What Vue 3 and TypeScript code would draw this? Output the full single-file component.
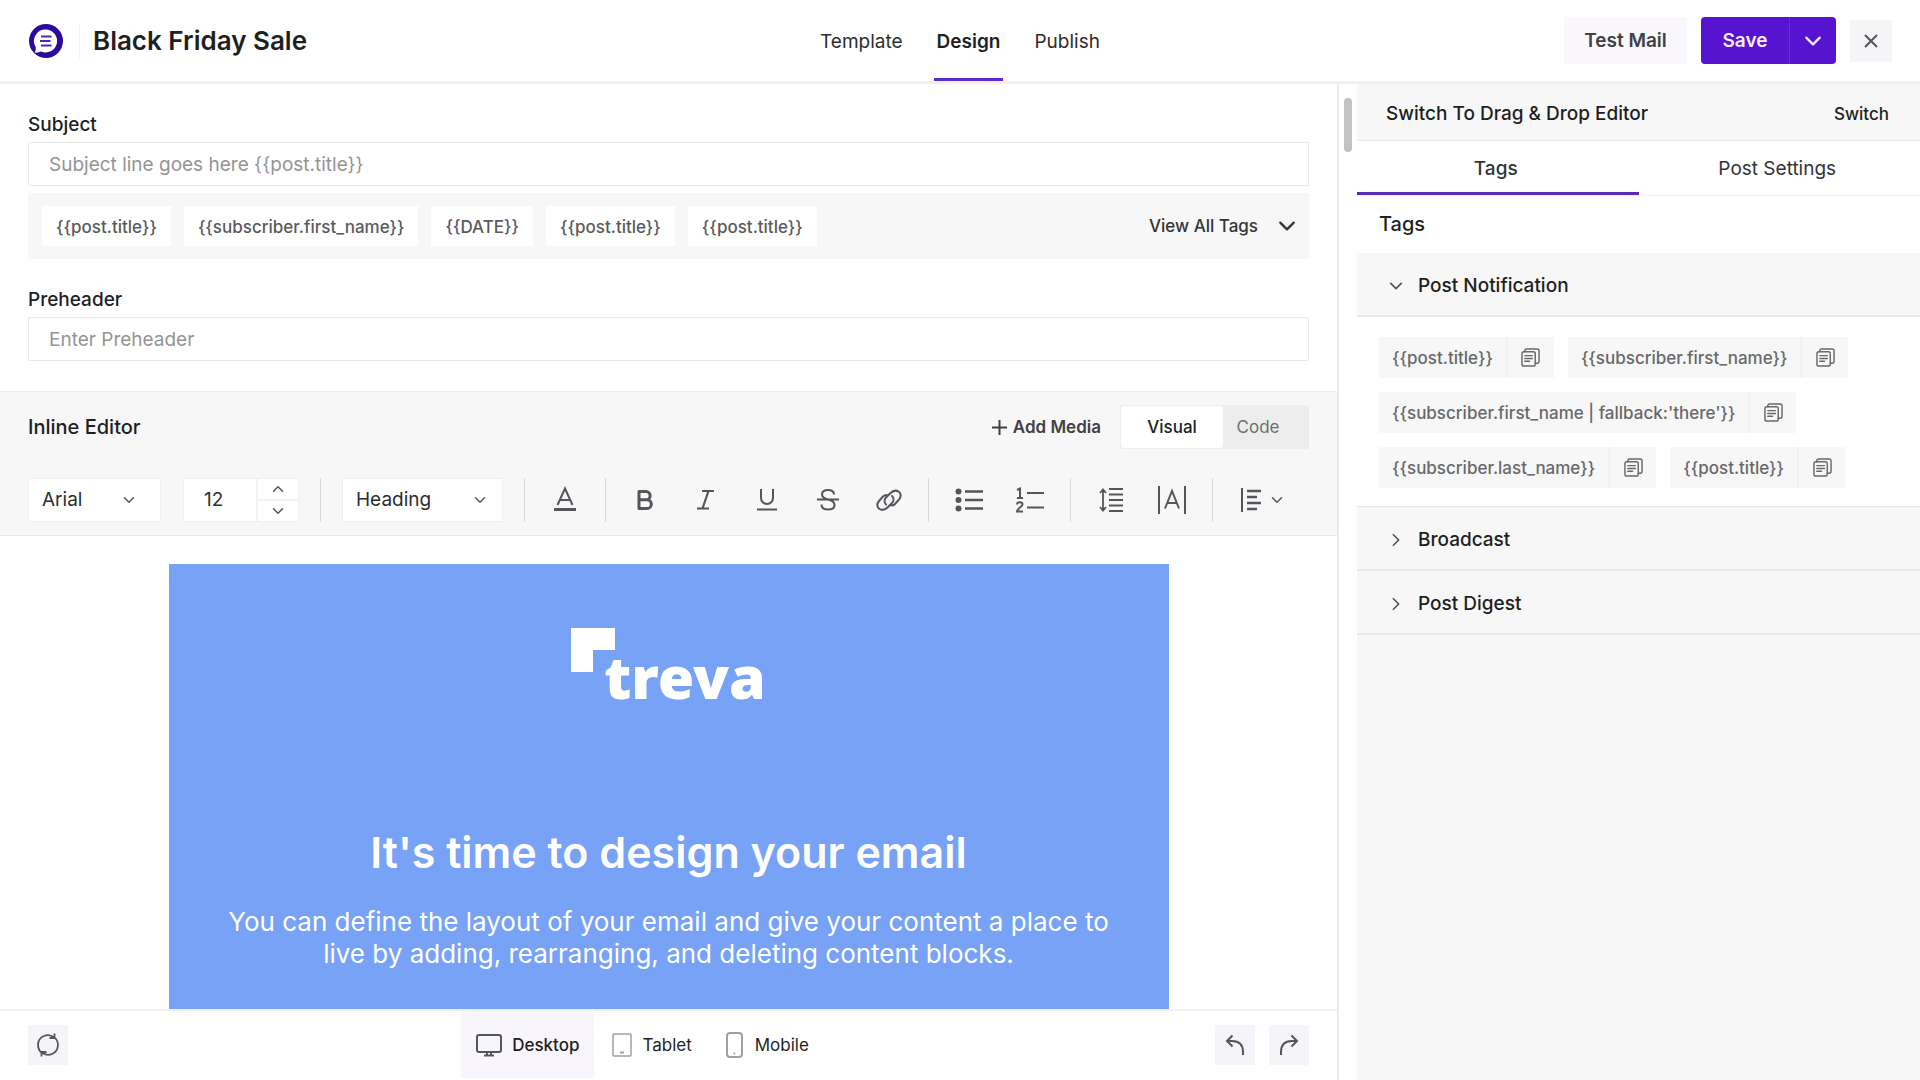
<script setup lang="ts">
import { ref } from 'vue'

const steps = ['Template', 'Design', 'Publish']
const activeStep = ref('Design')

const subject = ref('')
const preheader = ref('')
const subjectTags = [
  '{{post.title}}',
  '{{subscriber.first_name}}',
  '{{DATE}}',
  '{{post.title}}',
  '{{post.title}}',
]

const mode = ref<'Visual' | 'Code'>('Visual')
const fontFamily = ref('Arial')
const fontSize = ref('12')
const blockStyle = ref('Heading')

const device = ref('Desktop')

const panelTabs = ['Tags', 'Post Settings']
const activePanelTab = ref('Tags')

interface TagGroup {
  title: string
  open: boolean
  tags: string[]
}

const groups = ref<TagGroup[]>([
  {
    title: 'Post Notification',
    open: true,
    tags: [
      '{{post.title}}',
      '{{subscriber.first_name}}',
      "{{subscriber.first_name | fallback:'there'}}",
      '{{subscriber.last_name}}',
      '{{post.title}}',
    ],
  },
  { title: 'Broadcast', open: false, tags: [] },
  { title: 'Post Digest', open: false, tags: [] },
])

function stepSize(delta: number) {
  fontSize.value = String(Math.max(1, Number(fontSize.value) + delta))
}
</script>

<template>
  <div class="app">
    <svg class="defs" aria-hidden="true">
      <symbol id="chevron" viewBox="0 0 16 16">
        <path d="M2 5l6 6 6-6" fill="none" stroke="currentColor" stroke-width="2" stroke-linecap="round" stroke-linejoin="round" />
      </symbol>
      <symbol id="copy" viewBox="0 0 20 20">
        <g fill="none" stroke="currentColor" stroke-width="1.5" stroke-linecap="round" stroke-linejoin="round">
          <rect x="1" y="4" width="14" height="15" rx="2" />
          <path d="M4 4V3a2 2 0 0 1 2-2h11a2 2 0 0 1 2 2v11a2 2 0 0 1-2 2h-2M4 8h8M4 11h8M4 14h5" />
        </g>
      </symbol>
    </svg>

    <header class="topbar">
      <div class="brand">
        <svg class="logo" viewBox="0 0 34 34" aria-hidden="true">
          <circle cx="17" cy="17" r="17" fill="#2c0a9c" />
          <path d="M17.500 5.500a11.500 11.500 0 1 1-5.500 22c-2 .5-4 1.500-6.500 1 1-1 1.500-3 1.200-5.500A11.500 11.500 0 0 1 17.500 5.500z" fill="#fff" />
          <path d="M12 12.500h10.500M11 17h10.500M12 21.500h10.500" stroke="#4a2bb0" stroke-width="2" />
        </svg>
        <h1 class="title">Black Friday Sale</h1>
      </div>

      <nav class="steps">
        <a
          v-for="step in steps"
          :key="step"
          href="#"
          class="step"
          :class="{ active: step === activeStep }"
          @click.prevent="activeStep = step"
        >{{ step }}</a>
      </nav>

      <div class="actions">
        <button type="button" class="test-mail">Test Mail</button>
        <div class="save-group">
          <button type="button" class="save">Save</button>
          <button type="button" class="save-more" aria-label="More save options">
            <svg width="18" height="18"><use href="#chevron" /></svg>
          </button>
        </div>
        <button type="button" class="close" aria-label="Close">
          <svg width="14" height="14" viewBox="0 0 14 14"><path d="M1 1l12 12M13 1L1 13" stroke="currentColor" stroke-width="2" /></svg>
        </button>
      </div>
    </header>

    <div class="body">
      <main class="editor">
        <section class="fields">
          <label class="field-label" for="subject">Subject</label>
          <input id="subject" v-model="subject" class="field" type="text" placeholder="Subject line goes here {{post.title}}" />
          <div class="tag-strip">
            <div class="chips">
              <button v-for="(tag, i) in subjectTags" :key="i" type="button" class="chip">{{ tag }}</button>
            </div>
            <button type="button" class="view-all">
              View All Tags
              <svg width="18" height="18"><use href="#chevron" /></svg>
            </button>
          </div>
          <label class="field-label" for="preheader">Preheader</label>
          <input id="preheader" v-model="preheader" class="field" type="text" placeholder="Enter Preheader" />
        </section>

        <section class="inline-editor">
          <div class="inline-head">
            <h2 class="inline-title">Inline Editor</h2>
            <button type="button" class="add-media">
              <svg width="15" height="15" viewBox="0 0 15 15"><path d="M7.500 0v15M0 7.500h15" stroke="currentColor" stroke-width="2" /></svg>
              Add Media
            </button>
            <div class="modes">
              <button type="button" class="mode" :class="{ active: mode === 'Visual' }" @click="mode = 'Visual'">Visual</button>
              <button type="button" class="mode" :class="{ active: mode === 'Code' }" @click="mode = 'Code'">Code</button>
            </div>
          </div>

          <div class="toolbar">
            <div class="select family">
              <select v-model="fontFamily" aria-label="Font family">
                <option>Arial</option>
                <option>Georgia</option>
              </select>
              <svg width="12" height="12"><use href="#chevron" /></svg>
            </div>
            <div class="stepper">
              <input v-model="fontSize" type="text" aria-label="Font size" />
              <div class="stepper-buttons">
                <button type="button" aria-label="Increase size" @click="stepSize(1)">
                  <svg class="flip" width="12" height="12"><use href="#chevron" /></svg>
                </button>
                <button type="button" aria-label="Decrease size" @click="stepSize(-1)">
                  <svg width="12" height="12"><use href="#chevron" /></svg>
                </button>
              </div>
            </div>
            <span class="rule"></span>
            <div class="select block">
              <select v-model="blockStyle" aria-label="Block style">
                <option>Heading</option>
                <option>Paragraph</option>
              </select>
              <svg width="12" height="12"><use href="#chevron" /></svg>
            </div>
            <span class="rule"></span>
            <button type="button" class="tool solo" aria-label="Text colour">
              <svg viewBox="0 0 28 28"><path d="M6.500 19L14 2.500 21.500 19M9 14h10" fill="none" stroke="currentColor" stroke-width="2" /><path d="M3 23.500h22" stroke="currentColor" stroke-width="3" /></svg>
            </button>
            <span class="rule"></span>
            <div class="tools text-tools">
              <button type="button" class="tool" aria-label="Bold">
                <svg viewBox="0 0 28 28"><path d="M8 5.500h7a4 4 0 0 1 0 8.300H8zM8 13.800h8a4.300 4.300 0 0 1 0 8.700H8z" fill="none" stroke="currentColor" stroke-width="3" stroke-linejoin="round" /></svg>
              </button>
              <button type="button" class="tool" aria-label="Italic">
                <svg viewBox="0 0 28 28"><path d="M10 5h12M5 22.500h12M16.500 5l-6 17.500" fill="none" stroke="currentColor" stroke-width="2.200" /></svg>
              </button>
              <button type="button" class="tool" aria-label="Underline">
                <svg viewBox="0 0 28 28"><path d="M8 3v9a6 6 0 0 0 12 0V3M4 23.500h20" fill="none" stroke="currentColor" stroke-width="2" /></svg>
              </button>
              <button type="button" class="tool" aria-label="Strikethrough">
                <svg viewBox="0 0 28 28"><path d="M20 8.500C20 5.500 17.500 4 14 4c-3.500 0-6 1.700-6 4.500 0 3 2.500 4 6 5 4 1 6.500 2.200 6.500 5.500 0 3-2.500 4.500-6.500 4.500S7.500 22 7.500 18.500M3 13.500h22" fill="none" stroke="currentColor" stroke-width="2" /></svg>
              </button>
              <button type="button" class="tool" aria-label="Link">
                <svg viewBox="0 0 28 28"><path d="M11 18.500c-2-2-2-5 0-7l4-4c3-3 6-3.500 8.500-2s3 5 .5 8l-4 4.500c-1 1-2 1.600-3.500 1.600M17 10c2 2 2 5 0 7l-4 4c-3 3-6 3.500-8.500 2s-3-5-.5-8l4-4.500c1-1 2-1.600 3.500-1.600" fill="none" stroke="currentColor" stroke-width="2" stroke-linecap="round" /></svg>
              </button>
            </div>
            <span class="rule"></span>
            <div class="tools list-tools">
              <button type="button" class="tool" aria-label="Bulleted list">
                <svg viewBox="0 0 28 28"><g fill="currentColor"><circle cx="3.500" cy="5.500" r="3" /><circle cx="3.500" cy="14" r="3" /><circle cx="3.500" cy="22.500" r="3" /></g><path d="M10 5.500h18M10 14h18M10 22.500h18" stroke="currentColor" stroke-width="2.500" /></svg>
              </button>
              <button type="button" class="tool" aria-label="Numbered list">
                <svg viewBox="0 0 28 28"><path d="M1 4l3-1.500V12M1 12h6M1 18.500c0-3 5.500-3 5.500 0 0 2-5.500 4.500-5.500 7h6" fill="none" stroke="currentColor" stroke-width="2" /><path d="M11 7h17M11 21.500h17" stroke="currentColor" stroke-width="2" /></svg>
              </button>
            </div>
            <span class="rule"></span>
            <div class="tools list-tools">
              <button type="button" class="tool" aria-label="Line height">
                <svg viewBox="0 0 28 28"><path d="M6 3.500v21M3 7l3-3.500L9 7M3 21l3 3.500L9 21" fill="none" stroke="currentColor" stroke-width="1.800" /><path d="M12 3h14M12 8.500h14M12 14h14M12 19.500h14M12 25h14" stroke="currentColor" stroke-width="2" /></svg>
              </button>
              <button type="button" class="tool" aria-label="Letter spacing">
                <svg viewBox="0 0 28 28"><path d="M1 0v28M27 0v28M7 22.500L14 5l7 17.500M9.500 17h9" fill="none" stroke="currentColor" stroke-width="2" /></svg>
              </button>
            </div>
            <span class="rule"></span>
            <button type="button" class="tool align" aria-label="Alignment">
              <svg viewBox="0 0 28 28"><path d="M4 2v24" stroke="currentColor" stroke-width="2" /><path d="M9 5h14M9 11h10M9 17h14M9 23h10" stroke="currentColor" stroke-width="2.400" /></svg>
              <svg class="caret"><use href="#chevron" /></svg>
            </button>
          </div>
        </section>

        <section class="canvas">
          <article class="mail">
            <div class="treva">
              <svg width="44" height="44" viewBox="0 0 44 44" aria-hidden="true"><path d="M0 0h44v22H22v22H0z" fill="#fff" /></svg>
              <span class="treva-name">treva</span>
            </div>
            <h2 class="mail-title">It's time to design your email</h2>
            <p class="mail-text">You can define the layout of your email and give your content a place to live by adding, rearranging, and deleting content blocks.</p>
          </article>
        </section>

        <footer class="bottombar">
          <button type="button" class="square" aria-label="Refresh">
            <svg width="24" height="24" viewBox="0 0 24 24"><path d="M7.500 20.800A9.800 9.800 0 0 1 8 3a9.800 9.800 0 0 1 9 .8M16.500 3.200A9.800 9.800 0 0 1 16 21a9.800 9.800 0 0 1-9-.8M18.500 .5v4.500h-5M5.500 23.500v-4.500h5" fill="none" stroke="currentColor" stroke-width="1.800" /></svg>
          </button>
          <div class="devices">
            <button type="button" class="device" :class="{ active: device === 'Desktop' }" @click="device = 'Desktop'">
              <svg width="26" height="24" viewBox="0 0 26 24"><g fill="none" stroke="currentColor" stroke-width="2"><rect x="1" y="2" width="24" height="17" rx="2" /><path d="M11 19v3M15 19v3M8 22.500h10" /></g></svg>
              Desktop
            </button>
            <button type="button" class="device" :class="{ active: device === 'Tablet' }" @click="device = 'Tablet'">
              <svg class="pale" width="20" height="26" viewBox="0 0 20 26"><rect x="1" y="2" width="18" height="22" rx="1" fill="none" stroke="currentColor" stroke-width="1.500" /><path d="M8 20.500h4" stroke="currentColor" stroke-width="2" /></svg>
              Tablet
            </button>
            <button type="button" class="device" :class="{ active: device === 'Mobile' }" @click="device = 'Mobile'">
              <svg class="pale" width="20" height="26" viewBox="0 0 20 26"><rect x="2" y="1" width="15" height="24" rx="3" fill="none" stroke="currentColor" stroke-width="2" /><circle cx="9.500" cy="21.500" r="1" fill="currentColor" /></svg>
              Mobile
            </button>
          </div>
          <div class="history">
            <button type="button" class="square" aria-label="Undo">
              <svg width="20" height="22" viewBox="0 0 20 22"><path d="M18 21v-3c0-7-4-11-11-11H2M7.500 1.500L2 7l5.500 5.500" fill="none" stroke="currentColor" stroke-width="2" /></svg>
            </button>
            <button type="button" class="square" aria-label="Redo">
              <svg width="20" height="22" viewBox="0 0 20 22"><path d="M2 21v-3C2 11 6 7 13 7h5M12.500 1.500L18 7l-5.500 5.500" fill="none" stroke="currentColor" stroke-width="2" /></svg>
            </button>
          </div>
        </footer>
      </main>

      <div class="gutter"><div class="thumb"></div></div>

      <aside class="panel">
        <div class="switch-row">
          <span class="switch-text">Switch To Drag &amp; Drop Editor</span>
          <button type="button" class="switch">Switch</button>
        </div>
        <div class="panel-tabs">
          <button
            v-for="tab in panelTabs"
            :key="tab"
            type="button"
            class="panel-tab"
            :class="{ active: tab === activePanelTab }"
            @click="activePanelTab = tab"
          >{{ tab }}</button>
        </div>
        <h2 class="panel-title">Tags</h2>
        <section v-for="group in groups" :key="group.title" class="group">
          <button type="button" class="group-head" :aria-expanded="group.open" @click="group.open = !group.open">
            <svg width="14" height="14" :class="{ right: !group.open }"><use href="#chevron" /></svg>
            {{ group.title }}
          </button>
          <div v-if="group.open && group.tags.length" class="group-body">
            <div v-for="(tag, i) in group.tags" :key="i" class="tag">
              <span class="tag-name">{{ tag }}</span>
              <button type="button" class="copy" :aria-label="'Copy ' + tag">
                <svg width="19" height="19"><use href="#copy" /></svg>
              </button>
            </div>
          </div>
        </section>
      </aside>
    </div>
  </div>
</template>

<style>
body {
  margin: 0;
}
</style>

<style scoped>
.app {
  display: flex;
  flex-direction: column;
  height: 100vh;
  overflow: hidden;
  background: #fff;
  color: #1e1f22;
  font-family: Inter, 'Liberation Sans', sans-serif;
  font-size: 19px;
  line-height: 24px;
}

.app *,
.app *::before {
  box-sizing: border-box;
}

.defs {
  position: absolute;
  width: 0;
  height: 0;
}

button,
input,
select {
  margin: 0;
  padding: 0;
  border: 0;
  background: none;
  color: inherit;
  font: inherit;
}

button {
  display: flex;
  align-items: center;
  justify-content: center;
  white-space: nowrap;
}

h1,
h2,
p {
  margin: 0;
}

svg {
  display: block;
  flex: none;
}

/* top bar */
.topbar {
  display: grid;
  grid-template-columns: 1fr auto 1fr;
  flex: none;
  height: 84px;
  padding: 0 28px;
  border-bottom: 3px solid #f0f0f0;
}

.brand {
  display: flex;
  align-items: center;
  padding-left: 1px;
}

.logo {
  width: 34px;
  height: 34px;
}

.title {
  margin-left: 16px;
  padding-left: 13px;
  border-left: 1px solid #f0f0f0;
  font-size: 26px;
  font-weight: 600;
  line-height: 34px;
}

.steps {
  display: flex;
  gap: 28px;
}

.step {
  display: flex;
  align-items: center;
  padding: 5px 3px 0;
  border-bottom: 3px solid transparent;
  color: #2c2d30;
  text-decoration: none;
}

.step.active {
  border-color: #5a2bd0;
  color: #1e1f22;
  font-weight: 600;
}

.actions {
  display: flex;
  align-items: center;
  justify-content: flex-end;
  gap: 14px;
}

.test-mail {
  width: 123px;
  height: 47px;
  background: #faf8fd;
  color: #414145;
  font-weight: 600;
}

.save-group {
  display: flex;
  height: 47px;
  border-radius: 4px;
  background: #5714d0;
  color: #f6ecff;
  overflow: hidden;
}

.save {
  width: 88px;
  font-weight: 600;
}

.save-more {
  width: 47px;
  border-left: 1px solid #6a2fd8;
}

.close {
  width: 42px;
  height: 42px;
  background: #f5f4f6;
  color: #56565b;
}

/* columns */
.body {
  display: flex;
  flex: 1;
  min-height: 0;
}

.editor {
  display: flex;
  flex: 1;
  flex-direction: column;
  min-width: 0;
}

.gutter {
  flex: none;
  width: 20px;
  padding: 14px 5px;
  border-left: 2px solid #e9e9e9;
}

.thumb {
  width: 8px;
  height: 54px;
  border-radius: 4px;
  background: #c2c2c4;
}

.panel {
  flex: none;
  width: 563px;
  background: #f7f7f7;
}

/* fields */
.fields {
  display: flex;
  flex: none;
  flex-direction: column;
  padding: 29px 28px 30px;
}

.field-label {
  margin-bottom: 5px;
  font-weight: 500;
}

.field {
  height: 44px;
  padding: 0 20px;
  border: 1px solid #e9e9e9;
  border-radius: 2px;
}

.field::placeholder {
  color: #949494;
  opacity: 1;
}

.tag-strip {
  display: flex;
  align-items: center;
  justify-content: space-between;
  height: 66px;
  margin: 7px 0 29px;
  padding: 0 13px 0 14px;
  background: #f7f7f7;
}

.chips {
  display: flex;
  gap: 13px;
}

.chip {
  height: 40px;
  padding: 2px 14px 0;
  background: #fff;
  color: #5a5a5c;
  font-size: 17px;
  font-weight: 500;
}

.view-all {
  gap: 20px;
  color: #333437;
  font-size: 17px;
  font-weight: 500;
}

/* inline editor */
.inline-editor {
  flex: none;
  border-top: 1px solid #ebebeb;
  border-bottom: 1px solid #e8e8e8;
  background: #f7f7f7;
}

.inline-head {
  display: flex;
  align-items: center;
  gap: 19px;
  padding: 13px 28px 0;
}

.inline-title {
  flex: 1;
  font-size: 20px;
  font-weight: 500;
}

.add-media {
  gap: 6px;
  color: #414145;
  font-size: 17px;
  font-weight: 600;
}

.modes {
  display: flex;
  width: 189px;
  height: 44px;
  padding: 1px;
  border-radius: 2px;
  background: #ededed;
}

.mode {
  width: 70px;
  color: #6d6d70;
  font-size: 17px;
}

.mode.active {
  width: 102px;
  border-radius: 3px;
  background: #fff;
  color: #1e1f22;
  font-weight: 500;
}

.toolbar {
  display: flex;
  align-items: center;
  padding: 29px 28px 13px;
  color: #55565b;
}

.select {
  display: grid;
  align-items: center;
  height: 44px;
  border: 1px solid #f0f0f0;
  background: #fff;
}

.select > * {
  grid-area: 1 / 1;
}

.select select {
  width: 100%;
  height: 42px;
  padding: 0 13px;
  appearance: none;
  color: #2c2d30;
}

.select svg {
  justify-self: end;
  pointer-events: none;
}

.family {
  width: 133px;
  margin-right: 22px;
}

.family svg {
  margin-right: 25px;
}

.block {
  width: 161px;
}

.block svg {
  margin-right: 16px;
}

.stepper {
  display: flex;
  width: 116px;
  height: 44px;
  border: 1px solid #f0f0f0;
  background: #fff;
}

.stepper input {
  flex: 1;
  width: 0;
  padding-left: 20px;
  color: #2c2d30;
}

.stepper-buttons {
  display: flex;
  flex-direction: column;
  width: 42px;
  border-left: 2px solid #f3f3f3;
}

.stepper-buttons button {
  flex: 1;
}

.stepper-buttons button + button {
  border-top: 2px solid #f3f3f3;
}

.flip {
  transform: rotate(180deg);
}

.right {
  transform: rotate(-90deg);
}

.rule {
  width: 1px;
  height: 44px;
  margin: 0 21px;
  background: #d9d9da;
}

.tool {
  width: 28px;
  height: 28px;
}

.tool svg {
  width: 28px;
  height: 28px;
}

.solo {
  margin: 0 5px;
}

.tools {
  display: flex;
  gap: 33px;
}

.text-tools {
  margin: 0 4px;
}

.list-tools {
  margin: 0 5px;
}

.align {
  gap: 5px;
  width: auto;
  margin-left: 4px;
}

.align .caret {
  width: 12px;
  height: 12px;
}

/* mail canvas */
.canvas {
  display: flex;
  flex: 1;
  justify-content: center;
  min-height: 0;
  padding: 28px 28px 0;
  overflow: hidden;
}

.mail {
  display: flex;
  flex: 1;
  flex-direction: column;
  align-items: center;
  max-width: 1000px;
  min-height: 500px;
  padding: 64px 52px 0;
  background: #78a2f5;
  color: #fff;
  text-align: center;
}

.treva {
  display: flex;
  align-items: flex-start;
}

.treva-name {
  margin: 12px 0 0 -11px;
  font-family: 'Noto Sans', sans-serif;
  font-size: 59px;
  font-weight: 900;
  line-height: 72px;
}

.mail-title {
  margin-top: 114px;
  font-size: 43px;
  font-weight: 600;
  line-height: 52px;
}

.mail-text {
  margin-top: 28px;
  font-size: 26px;
  line-height: 32px;
}

/* bottom bar */
.bottombar {
  display: grid;
  grid-template-columns: 1fr auto 1fr;
  flex: none;
  align-items: center;
  height: 71px;
  padding: 0 28px 2px;
  border-top: 2px solid #f0f0f0;
}

.square {
  width: 40px;
  height: 40px;
  background: #f6f4f9;
  color: #55565b;
}

.devices {
  display: flex;
  align-self: stretch;
  padding-right: 52px;
}

.device {
  gap: 10px;
  padding: 0 15px 0 18px;
  font-size: 17px;
}

.device.active {
  padding-left: 15px;
  background: #f8f5fd;
  font-weight: 500;
}

.device.active svg {
  color: #55565b;
}

.pale {
  color: #a0a0a3;
}

.history {
  display: flex;
  justify-content: flex-end;
  gap: 14px;
}

/* side panel */
.switch-row {
  display: flex;
  align-items: center;
  justify-content: space-between;
  height: 57px;
  padding: 3px 31px 0 29px;
  border-bottom: 1px solid #e9e9e9;
}

.switch-text {
  font-weight: 500;
}

.switch {
  font-size: 17px;
  font-weight: 500;
}

.panel-tabs {
  display: flex;
  height: 55px;
  border-bottom: 1px solid #ececec;
  background: #fff;
}

.panel-tab {
  flex: 1;
  padding: 5px 4px 0 0;
  border-bottom: 3px solid transparent;
  color: #333437;
}

.panel-tab.active {
  border-color: #5a2bb8;
  font-weight: 500;
}

.panel-title {
  height: 57px;
  padding: 0 22px;
  background: #fff;
  font-size: 20px;
  font-weight: 500;
  line-height: 56px;
}

.group-head {
  justify-content: flex-start;
  gap: 15px;
  width: 100%;
  height: 64px;
  padding: 3px 32px 0;
  border-bottom: 2px solid #e9e9e9;
  font-weight: 500;
}

.group-head svg {
  color: #55565b;
}

.group-body {
  display: flex;
  flex-wrap: wrap;
  gap: 14px;
  padding: 20px 22px 18px;
  border-bottom: 1px solid #e3e3e3;
  background: #fff;
}

.tag {
  display: flex;
  height: 41px;
  background: #f7f7f7;
  color: #68686b;
  font-size: 17px;
  font-weight: 500;
}

.tag-name {
  padding: 0 13px;
  line-height: 42px;
}

.copy {
  width: 48px;
  border-left: 2px solid #f1f1f1;
}
</style>
